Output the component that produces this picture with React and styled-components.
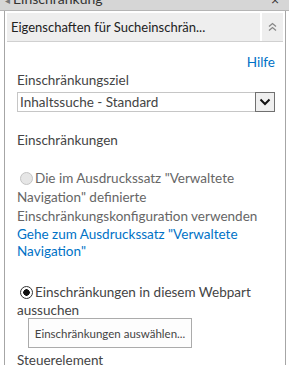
import React from 'react';
import styled, { createGlobalStyle } from 'styled-components';

const GlobalStyle = createGlobalStyle`
    html, body {
        margin: 0;
        padding: 0;
        background: #ffffff;
    }
    body {
        font-family: Lato, "Open Sans", sans-serif;
        width: 289px;
        height: 365px;
        overflow: hidden;
    }
`;

const TopBar = styled.div`
    height: 10px;
    background-color: #d6d6d6;
    border-bottom: 1px solid #b5b5b5;
    display: flex;
    justify-content: space-between;
    align-items: flex-end;
    overflow: hidden;
    padding: 0 10px 0 5px;
    font-size: 14px;
    color: #333;
    span {
        line-height: 14px;
        margin-bottom: 3px;
    }
    .arrow {
        font-size: 10px;
        color: #777;
        margin-right: 3px;
    }
`;

const Panel = styled.div`
    margin-left: 4px;
    width: 282px;
    height: 360px;
    border-left: 1px solid #a6a6a6;
    border-right: 1px solid #a6a6a6;
    padding: 2px 2px 0 2px;
    box-sizing: border-box;
`;

const Header = styled.div`
    display: flex;
    gap: 2px;
    height: 28px;
    border-bottom: 1px solid #d0d0d0;
`;

const HeaderTitle = styled.div`
    flex: 1;
    background-color: #eeeeee;
    display: flex;
    align-items: center;
    padding-left: 4px;
    font-size: 13px;
    color: #222;
    white-space: nowrap;
`;

const CollapseButton = styled.div`
    width: 21px;
    background-color: #eeeeee;
    display: flex;
    align-items: center;
    justify-content: center;
`;

const Body = styled.div`
    padding: 0 8px 0 10px;
    font-size: 13.5px;
    color: #555;
`;

const HelpRow = styled.div`
    text-align: right;
    margin-top: 12px;
    line-height: 16px;
    a {
        color: #0072c6;
        text-decoration: none;
        font-size: 13.5px;
    }
`;

const Label = styled.div`
    margin-top: ${p => p.$top || 0}px;
    line-height: 18px;
    color: #444;
`;

const Select = styled.div`
    margin-top: 3px;
    height: 20px;
    border: 1px solid #c6c6c6;
    box-sizing: border-box;
    display: flex;
    align-items: center;
    color: #444;
    padding-left: 2px;
    span {
        flex: 1;
    }
`;

const SelectArrow = styled.div`
    width: 20px;
    height: 20px;
    margin-right: -1px;
    box-sizing: border-box;
    border: 1px solid #707070;
    background-color: #efefef;
    display: flex;
    align-items: center;
    justify-content: center;
`;

const Option = styled.div`
    margin-top: ${p => p.$top}px;
    line-height: ${p => (p.$disabled ? 19 : 18)}px;
    color: ${p => (p.$disabled ? '#666' : '#444')};
`;

const Radio = styled.span`
    display: inline-block;
    width: 13px;
    height: 13px;
    border-radius: 50%;
    box-sizing: border-box;
    vertical-align: -2px;
    margin: 0 2px 0 3px;
    border: 1px solid ${p => (p.$checked ? '#333' : '#c4c4c4')};
    background: ${p => (p.$checked ? 'radial-gradient(circle, #111 0 3px, #fff 3.5px)' : '#e6e6e6')};
`;

const Link = styled.a`
    display: block;
    color: #0072c6;
    text-decoration: none;
    line-height: 17px;
`;

const Button = styled.button`
    display: block;
    margin: -1px 0 0 11px;
    width: 164px;
    height: 30px;
    background: #fdfdfd;
    border: 1px solid #ababab;
    font-family: Lato, "Open Sans", sans-serif;
    font-size: 11.5px;
    color: #444;
    padding: 0;
`;

const App = () => {
    return (
        <>
            <GlobalStyle />
            <TopBar>
                <span><span className='arrow'>◂</span>Einschränkung</span>
                <span>×</span>
            </TopBar>
            <Panel>
                <Header>
                    <HeaderTitle>Eigenschaften für Sucheinschrän...</HeaderTitle>
                    <CollapseButton>
                        <svg width='9' height='10' viewBox='0 0 9 10'>
                            <path d='M1 4.5 L4.5 1.5 L8 4.5 M1 8.5 L4.5 5.5 L8 8.5' fill='none' stroke='#888' strokeWidth='1.3' />
                        </svg>
                    </CollapseButton>
                </Header>
                <Body>
                    <HelpRow><a href='#'>Hilfe</a></HelpRow>
                    <Label $top={1}>Einschränkungsziel</Label>
                    <Select>
                        <span>Inhaltssuche - Standard</span>
                        <SelectArrow>
                            <svg width='12' height='8' viewBox='0 0 12 8'>
                                <path d='M1.5 1.5 L6 6 L10.5 1.5' fill='none' stroke='#111' strokeWidth='2' />
                            </svg>
                        </SelectArrow>
                    </Select>
                    <Label $top={19}>Einschränkungen</Label>
                    <Option $top={20} $disabled>
                        <Radio />Die im Ausdruckssatz "Verwaltete Navigation" definierte Einschränkungskonfiguration verwenden
                    </Option>
                    <Link href='#'>Gehe zum Ausdruckssatz "Verwaltete Navigation"</Link>
                    <Option $top={23}>
                        <Radio $checked />Einschränkungen in diesem Webpart aussuchen
                    </Option>
                    <Button>Einschränkungen auswählen...</Button>
                    <Label $top={3}>Steuerelement</Label>
                </Body>
            </Panel>
        </>
    );
};

export default App;
